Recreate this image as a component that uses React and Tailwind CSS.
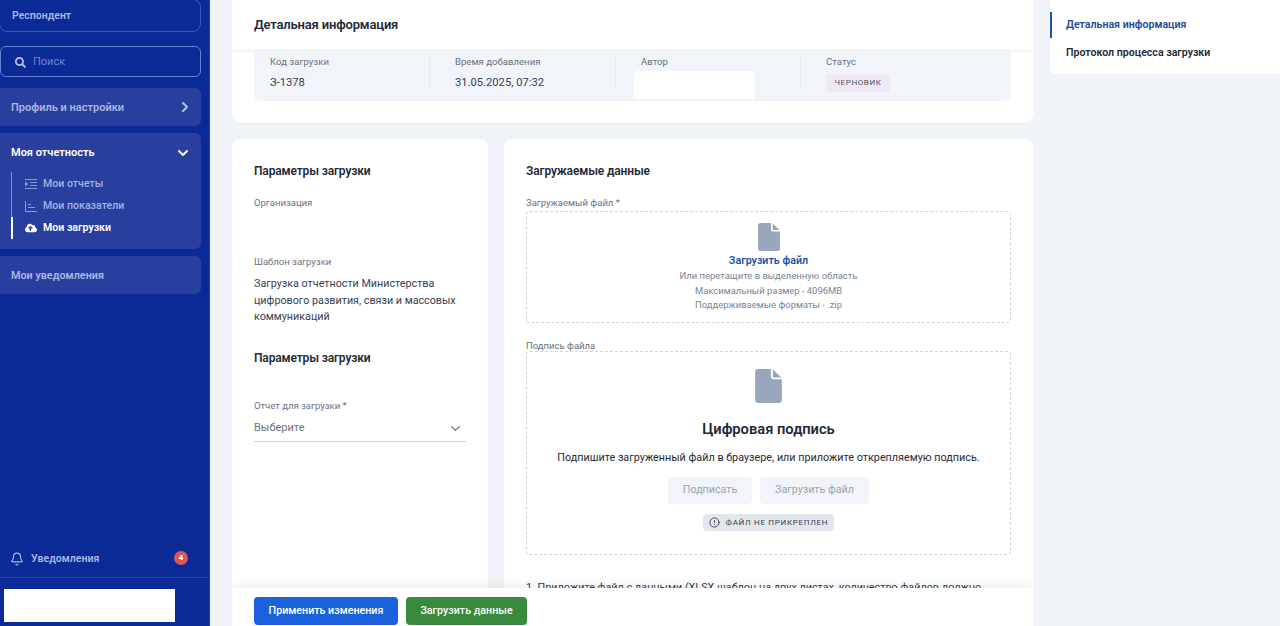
import React from "react";
import { ChevronDown, ChevronRight, Bell, CircleAlert } from "lucide-react";
import { FaSearch, FaCloudUploadAlt } from "react-icons/fa";

const FileIcon = ({ className }) => (
  <svg viewBox="0 0 22 28" className={className} fill="#9aa6bc">
    <path d="M2.5 0H13v6.5A2 2 0 0 0 15 8.5h7V25.5A2.5 2.5 0 0 1 19.5 28h-17A2.5 2.5 0 0 1 0 25.5V2.5A2.5 2.5 0 0 1 2.5 0Z" />
    <path d="M14.6 0.4 21.6 7H15.4a.8.8 0 0 1-.8-.8Z" />
  </svg>
);

const ReportsIcon = () => (
  <svg viewBox="0 0 12 10" className="w-3 h-2.5" fill="#8b9bd8">
    <rect x="0" y="0" width="12" height="1" />
    <rect x="5" y="3" width="7" height="1" />
    <rect x="5" y="6" width="7" height="1" />
    <rect x="0" y="9" width="12" height="1" />
    <path d="M0 2.5 3.5 5 0 7.5Z" />
  </svg>
);

const MetricsIcon = () => (
  <svg viewBox="0 0 12 11" className="w-3 h-[11px]" fill="#8b9bd8">
    <rect x="0" y="0" width="1" height="11" />
    <rect x="0" y="10" width="12" height="1" />
    <rect x="3" y="3" width="3" height="1" />
    <rect x="3" y="6" width="7" height="1" />
  </svg>
);

const InfoCol = ({ label, children, last, wide }) => (
  <div className={`${wide ? "w-[186px]" : "w-[185px]"} flex`}>
    <div className="flex-1 pl-4 pt-[6px]">
      <div className="text-[9.6px] leading-[13px] text-[#6b7280]">{label}</div>
      {children}
    </div>
    {!last && <div className="w-px h-9 mt-[5px] mr-[9px] bg-[#e8edf3]" />}
  </div>
);

const Sidebar = () => (
  <aside className="w-[210px] h-full shrink-0 bg-[#0b2a96] flex flex-col border-r border-[#1f3ea6]">
    <div className="pr-2">
      <div className="h-[33px] -mt-px -ml-px pl-3 flex items-center rounded-b-lg rounded-r-lg border border-[#3d57b8] text-[10.5px] font-semibold text-[#a9b6e6]">
        Респондент
      </div>
      <div className="mt-[14px] h-[31px] flex items-center gap-[7px] pl-[14px] pt-px rounded-md border border-[#6a80d2] text-[11px] text-[#6f84d6]">
        <FaSearch className="w-[11px] h-[11px] text-[#b4c0ec]" />
        Поиск
      </div>
      <div className="mt-[11px] h-[38px] pl-[11px] pr-2 pt-[3px] flex items-center justify-between rounded-r-md bg-[#283f9e] text-[11px] font-semibold text-[#a9b6e6]">
        Профиль и настройки
        <ChevronRight className="w-4 h-4 -mt-[3px] text-[#b4c0ec]" strokeWidth={3} />
      </div>
      <div className="mt-[7px] h-[116px] rounded-r-md bg-[#283f9e] pl-[11px] pr-[10px] pt-3">
        <div className="flex items-center justify-between text-[11px] font-semibold text-white">
          Моя отчетность
          <ChevronDown className="w-4 h-4" strokeWidth={3} />
        </div>
        <div className="mt-[10px] border-l border-[#7f8fd0] h-[67px] flex flex-col justify-end text-[10.6px] font-medium text-[#a3b1e6]">
          <div className="h-[22px] pl-[13px] pt-px flex items-center gap-[6px]">
            <ReportsIcon />
            Мои отчеты
          </div>
          <div className="h-[22px] pl-[13px] pt-px flex items-center gap-[6px]">
            <MetricsIcon />
            Мои показатели
          </div>
          <div className="h-[22px] -ml-px pl-3 pt-px border-l-2 border-white flex items-center gap-[6px] font-semibold text-white">
            <FaCloudUploadAlt className="w-3 h-3" />
            Мои загрузки
          </div>
        </div>
      </div>
      <div className="mt-[7px] h-[38px] pl-[11px] pt-[3px] flex items-center rounded-r-md bg-[#283f9e] text-[10.8px] font-semibold text-[#a9b6e6]">
        Мои уведомления
      </div>
    </div>
    <div className="mt-auto h-[38px] pl-[10px] pr-[21px] flex items-center justify-between text-[10.6px] font-semibold text-[#a9b6e6]">
      <div className="flex items-center gap-[7px] pt-[2px]">
        <Bell className="w-[14px] h-[14px]" />
        Уведомления
      </div>
      <div className="w-[14px] h-[14px] rounded-full bg-[#e25555] text-white text-[8px] font-bold flex items-center justify-center">
        4
      </div>
    </div>
    <div className="h-[49px] border-t border-[#2a45a8] pt-[11px] pl-1">
      <div className="w-[171px] h-[33px] bg-white" />
    </div>
  </aside>
);

const DetailsCard = () => (
  <section className="h-[123px] bg-white rounded-b-lg shadow-[0_1px_2px_rgba(15,23,42,0.04)]">
    <div className="h-[49px] px-[22px] pt-px flex items-center text-[13px] tracking-[-0.18px] font-semibold text-[#1f2937] shadow-[0_2px_4px_rgba(15,23,42,0.05)]">
      Детальная информация
    </div>
    <div className="mx-[22px] h-[52px] bg-[#f1f4f9] rounded-b-md flex items-stretch">
      <InfoCol label="Код загрузки">
        <div className="mt-[7px] text-[11.2px] text-[#374151]">З-1378</div>
      </InfoCol>
      <InfoCol label="Время добавления" wide>
        <div className="mt-[7px] text-[11.2px] text-[#374151]">31.05.2025, 07:32</div>
      </InfoCol>
      <InfoCol label="Автор">
        <div className="mt-[3px] -ml-[7px] w-[121px] h-7 bg-white rounded-sm" />
      </InfoCol>
      <InfoCol label="Статус" last>
        <div className="mt-[6px] w-16 h-[18px] rounded bg-[#efe9f6] flex items-center justify-center text-[8px] tracking-[0.6px] text-[#4b5563]">
          ЧЕРНОВИК
        </div>
      </InfoCol>
    </div>
  </section>
);

const ParamsCard = () => (
  <section className="w-[256px] h-[487px] bg-white rounded-t-lg px-[22px] pt-[24px]">
    <h2 className="text-[12px] tracking-[-0.15px] leading-4 font-semibold text-[#1f2937]">Параметры загрузки</h2>
    <div className="mt-[18px] text-[9.5px] leading-3 text-[#6b7280]">Организация</div>
    <div className="mt-[47px] text-[9.5px] leading-3 text-[#6b7280]">Шаблон загрузки</div>
    <p className="mt-[8px] text-[10.75px] leading-[16.5px] text-[#374151]">
      Загрузка отчетности Министерства цифрового развития, связи и массовых коммуникаций
    </p>
    <h2 className="mt-[24px] text-[12px] tracking-[-0.15px] leading-4 font-semibold text-[#1f2937]">Параметры загрузки</h2>
    <div className="mt-[34px] text-[9.5px] leading-3 text-[#6b7280]">Отчет для загрузки *</div>
    <div className="mt-[5px] h-[25px] border-b border-[#cbd2dc] flex items-center justify-between text-[11px] text-[#6b7280]">
      Выберите
      <ChevronDown className="w-[15px] h-[15px] mr-[3px]" />
    </div>
  </section>
);

const DataCard = () => (
  <section className="w-[529px] h-[487px] bg-white rounded-t-lg px-[22px] pt-[24px]">
    <h2 className="text-[12px] tracking-[-0.15px] leading-4 font-semibold text-[#1f2937]">Загружаемые данные</h2>
    <div className="mt-[18px] text-[9.5px] leading-3 text-[#6b7280]">Загружаемый файл *</div>
    <div className="mt-[2px] h-[112px] border border-dashed border-[#d1d5db] rounded-sm flex flex-col items-center pt-[11px] text-[9.45px] leading-[14.5px] text-[#7b8494]">
      <FileIcon className="w-[22px] h-7" />
      <div className="mt-[2px] text-[10.7px] leading-[15px] font-semibold text-[#1c54a8]">Загрузить файл</div>
      <div className="mt-[1px]">Или перетащите в выделенную область</div>
      <div>Максимальный размер - 4096MB</div>
      <div>Поддерживаемые форматы - .zip</div>
    </div>
    <div className="mt-[17px] text-[9.5px] leading-3 text-[#6b7280]">Подпись файла</div>
    <div className="-mt-px h-[204px] border border-dashed border-[#d1d5db] rounded-sm flex flex-col items-center pt-[17px]">
      <FileIcon className="w-[27px] h-[34px]" />
      <div className="mt-[16px] text-[14.7px] leading-5 font-semibold text-[#1f2937]">Цифровая подпись</div>
      <div className="mt-[9px] text-[10.8px] leading-5 text-[#1f2937]">
        Подпишите загруженный файл в браузере, или приложите открепляемую подпись.
      </div>
      <div className="mt-[9px] flex gap-2 text-[10.7px] text-[#9ca3af]">
        <div className="w-[84px] h-[27px] rounded bg-[#f1f4f9] flex items-center justify-center">Подписать</div>
        <div className="w-[109px] h-[27px] rounded bg-[#f1f4f9] flex items-center justify-center">Загрузить файл</div>
      </div>
      <div className="mt-[10px] w-[131px] h-[17px] rounded-sm bg-[#e2e7ee] flex items-center justify-center gap-[6px] text-[8px] tracking-[0.7px] text-[#374151]">
        <CircleAlert className="w-[11px] h-[11px]" />
        ФАЙЛ НЕ ПРИКРЕПЛЕН
      </div>
    </div>
    <p className="mt-[25px] text-[10.8px] leading-4 whitespace-nowrap text-[#374151]">
      1. Приложите файл с данными (XLSX шаблон на двух листах, количество файлов должно
    </p>
  </section>
);

const RightNav = () => (
  <nav className="w-[230px] h-[74px] ml-[17px] shrink-0 bg-white rounded-bl-md pt-3 text-[10.6px] font-semibold">
    <div className="h-[26px] pl-[14px] border-l-2 border-[#1c54a8] flex items-center text-[#1c4a94]">
      Детальная информация
    </div>
    <div className="h-[29px] pl-4 flex items-center text-[#1f2937]">Протокол процесса загрузки</div>
  </nav>
);

export default function App() {
  return (
    <div className="h-screen w-full flex overflow-hidden bg-[#f0f4f8] font-['Roboto',sans-serif]">
      <Sidebar />
      <main className="flex-1 flex pl-[22px]">
        <div className="w-[801px] shrink-0 relative h-full overflow-hidden">
          <DetailsCard />
          <div className="mt-4 flex gap-4">
            <ParamsCard />
            <DataCard />
          </div>
          {/* sticky action bar */}
          <div className="absolute left-0 right-0 bottom-0 h-[38px] bg-white pl-[22px] pt-[9px] flex gap-2 shadow-[0_-4px_10px_rgba(15,23,42,0.06)] text-[10.7px] font-medium text-white">
            <button className="w-[144px] h-7 rounded bg-[#1a62dc]">Применить изменения</button>
            <button className="w-[121px] h-7 rounded bg-[#3a8a3e]">Загрузить данные</button>
          </div>
        </div>
        <RightNav />
      </main>
    </div>
  );
}
